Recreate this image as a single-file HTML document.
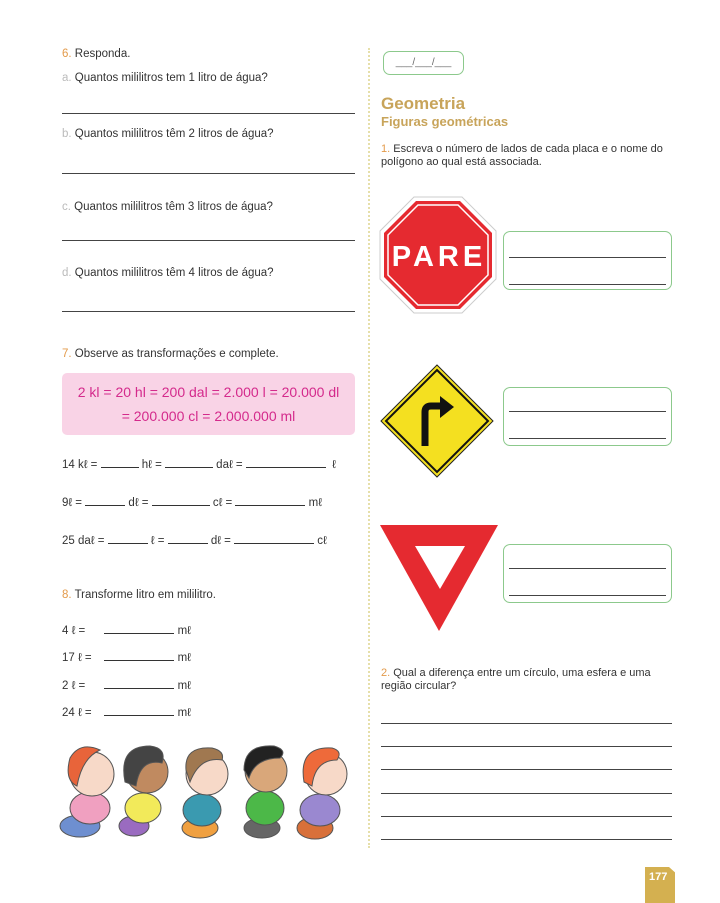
<!DOCTYPE html>
<html><head><meta charset="utf-8"><style>
*{margin:0;padding:0;box-sizing:border-box}
body{width:720px;height:903px;background:#fff;position:relative;font-family:"Liberation Sans",sans-serif;color:#333;overflow:hidden}
.t{position:absolute;font-size:11.5px;white-space:nowrap}
.n{color:#e39a4a}
.l{color:#bbb}
.ln{position:absolute;height:1px;background:#444}
.box{position:absolute;border:1.5px solid #8cc98c;border-radius:7px}
.u{display:inline-block;border-bottom:1px solid #333;height:10px;vertical-align:baseline}
</style></head><body>
<div class="t" style="left:62px;top:48px"><span class="n">6.</span> Responda.</div>
<div class="t" style="left:62px;top:72px"><span class="l">a.</span> Quantos mililitros tem 1 litro de água?</div>
<div class="ln" style="left:62px;top:113px;width:293px"></div>
<div class="t" style="left:62px;top:128px"><span class="l">b.</span> Quantos mililitros têm 2 litros de água?</div>
<div class="ln" style="left:62px;top:173px;width:293px"></div>
<div class="t" style="left:62px;top:201px"><span class="l">c.</span> Quantos mililitros têm 3 litros de água?</div>
<div class="ln" style="left:62px;top:240px;width:293px"></div>
<div class="t" style="left:62px;top:267px"><span class="l">d.</span> Quantos mililitros têm 4 litros de água?</div>
<div class="ln" style="left:62px;top:311px;width:293px"></div>
<div class="t" style="left:62px;top:348px"><span class="n">7.</span> Observe as transformações e complete.</div>
<div style="position:absolute;left:62px;top:373px;width:293px;height:62px;background:#f9d3e6;border-radius:5px;color:#d42a8c;font-size:14px;text-align:center;line-height:24px;padding-top:7px">2 kl = 20 hl = 200 dal = 2.000 l = 20.000 dl<br>= 200.000 cl = 2.000.000 ml</div>
<div class="t" style="left:62px;top:458px">14 kℓ = <span class="u" style="width:38px"></span> hℓ = <span class="u" style="width:48px"></span> daℓ = <span class="u" style="width:80px"></span> &nbsp;ℓ</div>
<div class="t" style="left:62px;top:496px">9ℓ = <span class="u" style="width:40px"></span> dℓ = <span class="u" style="width:58px"></span> cℓ = <span class="u" style="width:70px"></span> mℓ</div>
<div class="t" style="left:62px;top:534px">25 daℓ = <span class="u" style="width:40px"></span> ℓ = <span class="u" style="width:40px"></span> dℓ = <span class="u" style="width:80px"></span> cℓ</div>
<div class="t" style="left:62px;top:589px"><span class="n">8.</span> Transforme litro em mililitro.</div>
<div class="t" style="left:62px;top:624px">4 ℓ = &nbsp;&nbsp;&nbsp;&nbsp;&nbsp;<span class="u" style="width:70px"></span> mℓ</div>
<div class="t" style="left:62px;top:651px">17 ℓ = &nbsp;&nbsp;&nbsp;<span class="u" style="width:70px"></span> mℓ</div>
<div class="t" style="left:62px;top:679px">2 ℓ = &nbsp;&nbsp;&nbsp;&nbsp;&nbsp;<span class="u" style="width:70px"></span> mℓ</div>
<div class="t" style="left:62px;top:706px">24 ℓ = &nbsp;&nbsp;&nbsp;<span class="u" style="width:70px"></span> mℓ</div>
<svg style="position:absolute;left:50px;top:738px" width="310" height="105">
<g stroke="#555" stroke-width="1">
<ellipse cx="30" cy="88" rx="20" ry="11" fill="#6e8fd0"/><ellipse cx="40" cy="70" rx="20" ry="16" fill="#f0a0c0"/><circle cx="42" cy="36" r="22" fill="#f7d9c8"/><path d="M20 20 Q30 3 50 12 Q32 20 27 48 Q14 42 20 20Z" fill="#e8643a"/>
<ellipse cx="84" cy="88" rx="15" ry="10" fill="#9a6bc0"/><ellipse cx="93" cy="70" rx="18" ry="15" fill="#f2ea5a"/><circle cx="97" cy="34" r="21" fill="#c08a60"/><path d="M75 44 Q68 8 100 8 Q117 10 112 25 Q90 20 86 48Z" fill="#444"/>
<ellipse cx="150" cy="90" rx="18" ry="10" fill="#f0a040"/><ellipse cx="152" cy="72" rx="19" ry="16" fill="#3a9ab0"/><circle cx="157" cy="36" r="21" fill="#f7d9c8"/><path d="M136 32 Q134 8 162 10 Q175 13 172 22 Q150 18 140 44Z" fill="#a07850"/>
<ellipse cx="212" cy="90" rx="18" ry="10" fill="#666"/><ellipse cx="215" cy="70" rx="19" ry="17" fill="#4cb848"/><circle cx="216" cy="33" r="21" fill="#d9a77a"/><path d="M194 32 Q194 6 224 8 Q238 12 230 20 Q205 20 199 40Z" fill="#222"/>
<ellipse cx="265" cy="90" rx="18" ry="11" fill="#d8703a"/><ellipse cx="270" cy="72" rx="20" ry="16" fill="#9a88d0"/><circle cx="276" cy="36" r="21" fill="#f7d9c8"/><path d="M254 44 Q248 8 282 10 Q293 13 287 22 Q265 22 262 48Z" fill="#ee6a3a"/>
</g></svg>
<div style="position:absolute;left:368px;top:48px;height:800px;border-left:2px dotted #e6dfaa"></div>
<div class="box" style="left:383px;top:51px;width:81px;height:24px;font-size:10px;color:#666;text-align:center;line-height:22px">___/___/___</div>
<div style="position:absolute;left:381px;top:94px;font-size:17px;font-weight:bold;color:#c8a45a">Geometria</div>
<div style="position:absolute;left:381px;top:114px;font-size:13px;font-weight:bold;color:#c8a45a">Figuras geométricas</div>
<div class="t" style="left:381px;top:143px;line-height:13px;font-size:11px"><span class="n">1.</span> Escreva o número de lados de cada placa e o nome do<br>polígono ao qual está associada.</div>
<svg style="position:absolute;left:378px;top:195px" width="120" height="120"><polygon points="36,2 84,2 118,36 118,84 84,118 36,118 2,84 2,36" fill="#fff" stroke="#ccc"/><polygon points="38,6 82,6 114,38 114,82 82,114 38,114 6,82 6,38" fill="#e52a30"/><polygon points="40,10 80,10 110,40 110,80 80,110 40,110 10,80 10,40" fill="none" stroke="#fff" stroke-width="1.5"/><text x="61" y="71" font-family="Liberation Sans" font-weight="bold" font-size="29" fill="#fff" text-anchor="middle" letter-spacing="4">PARE</text></svg>
<div class="box" style="left:503px;top:231px;width:169px;height:59px"></div>
<div class="ln" style="left:509px;top:257px;width:157px"></div><div class="ln" style="left:509px;top:284px;width:157px"></div>
<svg style="position:absolute;left:380px;top:364px" width="114" height="114"><polygon points="57,1 113,57 57,113 1,57" fill="#f4e020" stroke="#222" stroke-width="1"/><polygon points="57,6 108,57 57,108 6,57" fill="none" stroke="#111" stroke-width="2"/><path d="M45 82 V48 Q45 42 51 42 H62" fill="none" stroke="#111" stroke-width="7"/><polygon points="60,32 74,43 60,54" fill="#111"/></svg>
<div class="box" style="left:503px;top:387px;width:169px;height:59px"></div>
<div class="ln" style="left:509px;top:411px;width:157px"></div><div class="ln" style="left:509px;top:438px;width:157px"></div>
<svg style="position:absolute;left:380px;top:525px" width="120" height="110"><polygon points="0,0 118,0 59,106" fill="#e52a30"/><polygon points="35,21 85,21 60,64" fill="#fff"/></svg>
<div class="box" style="left:503px;top:544px;width:169px;height:59px"></div>
<div class="ln" style="left:509px;top:568px;width:157px"></div><div class="ln" style="left:509px;top:595px;width:157px"></div>
<div class="t" style="left:381px;top:667px;line-height:13px;font-size:11px"><span class="n">2.</span> Qual a diferença entre um círculo, uma esfera e uma<br>região circular?</div>
<div class="ln" style="left:381px;top:723px;width:291px"></div>
<div class="ln" style="left:381px;top:746px;width:291px"></div>
<div class="ln" style="left:381px;top:769px;width:291px"></div>
<div class="ln" style="left:381px;top:793px;width:291px"></div>
<div class="ln" style="left:381px;top:816px;width:291px"></div>
<div class="ln" style="left:381px;top:839px;width:291px"></div>
<div style="position:absolute;left:645px;top:867px;width:30px;height:36px;background:#d4b050;clip-path:polygon(0 0,80% 0,100% 15%,100% 100%,0 100%);color:#fff;font-weight:bold;font-size:11px;padding:4px 0 0 4px">177</div>
</body></html>
